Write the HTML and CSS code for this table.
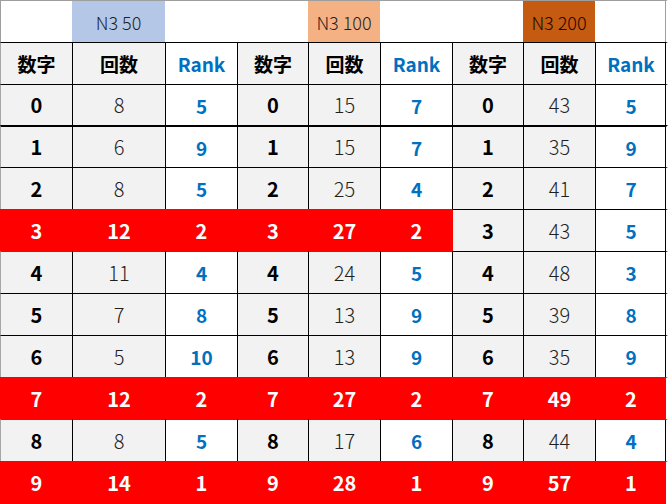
FILE: index.html
```html
<!DOCTYPE html>
<html lang="ja">
<head>
<meta charset="utf-8">
<link rel="stylesheet" href="styles.css">
</head>
<body>
<div class="sheet">
  <div class="c t first"></div><div class="c t blue">N3 50</div><div class="c t"></div>
  <div class="c t"></div><div class="c t peach">N3 100</div><div class="c t"></div>
  <div class="c t"></div><div class="c t rust">N3 200</div><div class="c t last"></div>

  <div class="c h g first">数字</div><div class="c h g">回数</div><div class="c h rkh">Rank</div>
  <div class="c h g">数字</div><div class="c h g">回数</div><div class="c h rkh">Rank</div>
  <div class="c h g">数字</div><div class="c h g">回数</div><div class="c h rkh last">Rank</div>

  <div class="c g k first">0</div><div class="c g n">8</div><div class="c rk">5</div>
  <div class="c g k">0</div><div class="c g n">15</div><div class="c rk">7</div>
  <div class="c g k">0</div><div class="c g n">43</div><div class="c rk last">5</div>

  <div class="c g k first thick">1</div><div class="c g n thick">6</div><div class="c rk thick">9</div>
  <div class="c g k thick">1</div><div class="c g n thick">15</div><div class="c rk thick">7</div>
  <div class="c g k thick">1</div><div class="c g n thick">35</div><div class="c rk last thick">9</div>

  <div class="c g k first">2</div><div class="c g n">8</div><div class="c rk">5</div>
  <div class="c g k">2</div><div class="c g n">25</div><div class="c rk">4</div>
  <div class="c g k">2</div><div class="c g n">41</div><div class="c rk last">7</div>

  <div class="c r first">3</div><div class="c r">12</div><div class="c r">2</div>
  <div class="c r">3</div><div class="c r">27</div><div class="c r">2</div>
  <div class="c g k rl">3</div><div class="c g n">43</div><div class="c rk last">5</div>

  <div class="c g k first rt">4</div><div class="c g n rt">11</div><div class="c rk rt">4</div>
  <div class="c g k rt">4</div><div class="c g n rt">24</div><div class="c rk rt">5</div>
  <div class="c g k">4</div><div class="c g n">48</div><div class="c rk last">3</div>

  <div class="c g k first">5</div><div class="c g n">7</div><div class="c rk">8</div>
  <div class="c g k">5</div><div class="c g n">13</div><div class="c rk">9</div>
  <div class="c g k">5</div><div class="c g n">39</div><div class="c rk last">8</div>

  <div class="c g k first">6</div><div class="c g n">5</div><div class="c rk">10</div>
  <div class="c g k">6</div><div class="c g n">13</div><div class="c rk">9</div>
  <div class="c g k">6</div><div class="c g n">35</div><div class="c rk last">9</div>

  <div class="c r first">7</div><div class="c r">12</div><div class="c r">2</div>
  <div class="c r">7</div><div class="c r">27</div><div class="c r">2</div>
  <div class="c r">7</div><div class="c r">49</div><div class="c r last">2</div>

  <div class="c g k first rt">8</div><div class="c g n rt">8</div><div class="c rk rt">5</div>
  <div class="c g k rt">8</div><div class="c g n rt">17</div><div class="c rk rt">6</div>
  <div class="c g k rt">8</div><div class="c g n rt">44</div><div class="c rk last rt">4</div>

  <div class="c r first">9</div><div class="c r">14</div><div class="c r">1</div>
  <div class="c r">9</div><div class="c r">28</div><div class="c r">1</div>
  <div class="c r">9</div><div class="c r">57</div><div class="c r last">1</div>
</div>
</body>
</html>
```

FILE: styles.css
```css
html, body {
  margin: 0;
  padding: 0;
  background: #ffffff;
}

.sheet {
  width: 668px;
  height: 504px;
  display: grid;
  grid-template-columns: 72px 93px 72px 71px 72px 72px 71px 72px 73px;
  grid-template-rows: 42px 42px 41px 42px 42px 42px 42px 42px 42px 42px 42px 43px;
  font-family: "Noto Sans CJK JP", "Noto Sans", sans-serif;
  overflow: hidden;
}

.c {
  box-sizing: border-box;
  display: flex;
  align-items: center;
  justify-content: center;
  border-left: 1px solid #000;
  border-top: 1px solid #000;
  line-height: 1;
  color: #000;
}

.first {
  border-left-color: #a6a6a6;
}

.last {
  border-right: 2px solid #fff;
  box-shadow: inset -1px 0 0 #000;
}

/* title row */
.t {
  border-left: none;
  border-top: 1px solid #9e9e9e;
  font-size: 18px;
  font-weight: 300;
  color: #1f1f1f;
  background: #fff;
}
.t.first {
  border-left: 1px solid #9e9e9e;
}
.t.last {
  box-shadow: inset -1px 0 0 #9e9e9e;
}
.blue { background: #b4c7e7; }
.peach { background: #f4b183; }
.rust { background: #c55a11; color: #1a0800; }

/* header row */
.h {
  font-size: 19px;
  font-weight: 700;
}
.rkh {
  color: #0070c0;
  font-size: 19px;
  background: #fff;
}

.g { background: #f2f2f2; }

.k {
  font-size: 20px;
  font-weight: 700;
}
.n {
  font-size: 20px;
  font-weight: 300;
  color: #1f1f1f;
}
.rk {
  font-size: 19px;
  font-weight: 700;
  color: #0070c0;
  background: #fff;
}

.thick {
  border-top-width: 2px;
}

.r {
  background: #ff0000;
  color: #fff;
  font-size: 20px;
  font-weight: 700;
  border-left-color: #ff0000;
  border-top-color: #ff0000;
}
.r.last {
  box-shadow: none;
}
.rl { border-left-color: #ff0000; }
.rt { border-top-color: #ff0000; }
```
